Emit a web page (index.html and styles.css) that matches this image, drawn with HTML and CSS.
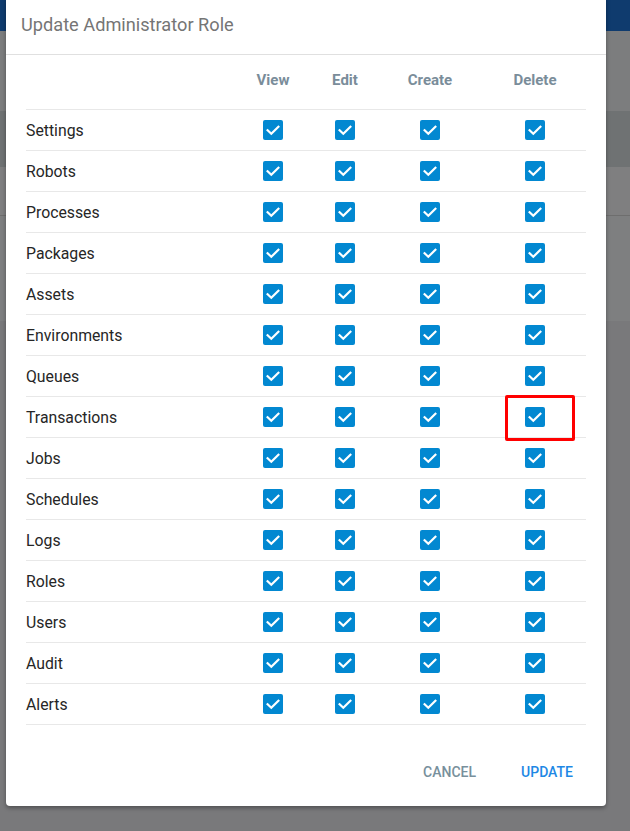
FILE: index.html
```html
<!DOCTYPE html>
<html>
<head>
<meta charset="utf-8">
<link rel="stylesheet" href="styles.css">
</head>
<body>
<div class="backdrop">
  <div class="band band-header"></div>
  <div class="band band-a"></div>
  <div class="band band-b"></div>
  <div class="band band-c"></div>
  <div class="band band-line"></div>
  <div class="band band-d"></div>
  <div class="band band-e"></div>
</div>

<div class="dialog">
  <div class="dialog-title">Update Administrator Role</div>
  <div class="dialog-body">
    <div class="perm-table">
      <div class="row head">
        <div class="cell label"></div>
        <div class="cell">View</div>
        <div class="cell">Edit</div>
        <div class="cell">Create</div>
        <div class="cell">Delete</div>
      </div>
    </div>
    <div class="perm-table" id="rows"></div>
  </div>
  <div class="dialog-actions">
    <button class="btn btn-cancel">CANCEL</button>
    <button class="btn btn-update">UPDATE</button>
  </div>
  <div class="highlight"></div>
</div>

<script>
var names = ["Settings","Robots","Processes","Packages","Assets","Environments","Queues","Transactions","Jobs","Schedules","Logs","Roles","Users","Audit","Alerts"];
var box = '<span class="cb"><svg width="20" height="20" viewBox="0 0 20 20"><path d="M4.6 10.2 L8.3 13.8 L15.4 6.7" fill="none" stroke="#fff" stroke-width="2.2" stroke-linecap="square"/></svg></span>';
var html = "";
names.forEach(function(n){
  html += '<div class="row"><div class="cell label">' + n + '</div>' +
    '<div class="cell">' + box + '</div><div class="cell">' + box + '</div><div class="cell">' + box + '</div><div class="cell">' + box + '</div></div>';
});
document.getElementById("rows").innerHTML = html;
</script>
</body>
</html>
```

FILE: styles.css
```css
html, body {
  margin: 0;
  padding: 0;
}
body {
  width: 630px;
  height: 831px;
  overflow: hidden;
  background: #79797b;
  font-family: Roboto, "Liberation Sans", sans-serif;
  position: relative;
}
.backdrop {
  display: flex;
  flex-direction: column;
}
.band { width: 100%; }
.band-header { height: 31px; background: #0f3b6e; }
.band-a { height: 80px; background: #7c7d7e; }
.band-b { height: 56px; background: #6f7273; }
.band-c { height: 48px; background: #7f7f80; }
.band-line { height: 1px; background: #6e6e6e; }
.band-d { height: 105px; background: #7e7f80; }
.band-e { height: 20px; background: #79797b; }

.dialog {
  position: absolute;
  left: 6px;
  top: -4px;
  width: 600px;
  height: 810px;
  background: #fff;
  border-radius: 4px;
  box-shadow: 0 2px 4px rgba(0,0,0,0.35);
  display: flex;
  flex-direction: column;
}
.dialog-title {
  height: 59px;
  box-sizing: border-box;
  padding: 4px 15px 6px;
  display: flex;
  align-items: center;
  font-size: 18.2px;
  color: #757575;
  border-bottom: 1px solid #e0e0e0;
}
.dialog-body {
  padding: 0 20px;
}
.perm-table {
  display: flex;
  flex-direction: column;
}
.row {
  display: grid;
  grid-template-columns: 206px 82px 62px 108px 102px;
  height: 41px;
  box-sizing: border-box;
  border-bottom: 1px solid #e8e8e8;
  align-items: center;
}
.row.head {
  height: 55px;
  padding-bottom: 4px;
  font-weight: 700;
  font-size: 15px;
  color: #7a8d9a;
}
.cell {
  display: flex;
  justify-content: center;
  align-items: center;
}
.cell.label {
  justify-content: flex-start;
  font-size: 15.8px;
  color: #262626;
}
.cb {
  width: 20px;
  height: 20px;
  border-radius: 2px;
  background: #0288d1;
  display: block;
}
.cb svg { display: block; }

.dialog-actions {
  display: flex;
  justify-content: flex-end;
  gap: 19px;
  padding: 31px 20px 0;
}
.btn {
  height: 32px;
  border: none;
  background: transparent;
  font-family: Roboto, "Liberation Sans", sans-serif;
  font-size: 14px;
  font-weight: 500;
  padding: 0 13px;
  cursor: pointer;
}
.btn-cancel { color: #78909c; }
.btn-update { color: #1e88e5; }

.highlight {
  position: absolute;
  left: 499px;
  top: 399px;
  width: 70px;
  height: 46px;
  box-sizing: border-box;
  border: 3px solid #ff0000;
  border-radius: 2px;
}
```
